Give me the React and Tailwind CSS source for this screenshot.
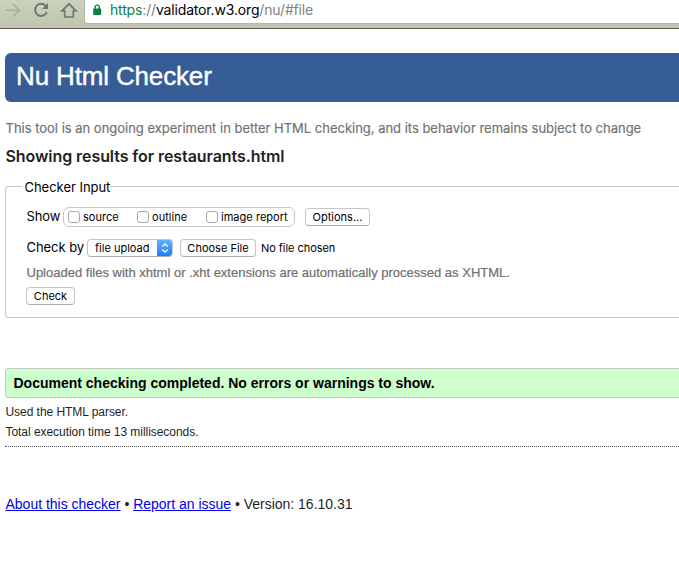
import React from "react";

const inter = "font-[Inter,sans-serif]";

function Toolbar() {
  return (
    <div className="flex h-[29px] w-full items-start border-b border-[#665e54] bg-linear-to-b from-[#cbd2be] to-[#bdc5b1]">
      <svg width="84" height="24" viewBox="0 0 84 24" className="shrink-0" fill="none" stroke="#72756f" strokeWidth="2">
        <path d="M6 10.3H19M12.8 3.8L19.3 10.3L12.8 16.8" stroke="#a9ae9f" strokeWidth="1.5" />
        <path d="M45.8 5.8A6.1 6.1 0 1 0 46.9 12" />
        <path d="M48 3V9H42Z" fill="#72756f" stroke="none" />
        <path d="M62 10.9L69 3.8L76 10.9H73.3V17H64.7V10.9Z" strokeWidth="1.7" />
      </svg>
      <div className="flex h-6 flex-1 items-start rounded-bl-[3px] border-b border-l border-[#b1b5aa] bg-white pl-2">
        <svg width="9" height="12" viewBox="0 0 9 12" className="mt-1">
          <path d="M2.1 5V3.2a2.1 2.1 0 0 1 4.2 0V5" fill="none" stroke="#0b8043" strokeWidth="1.4" />
          <rect x="0.2" y="4.5" width="8" height="6.5" rx="0.7" fill="#0b8043" />
        </svg>
        <span className={`${inter} ml-[8px] whitespace-nowrap text-[14px] leading-5 tracking-[-0.16px] text-black`}>
          <span className="text-[#0b8043]">https</span>
          <span className="text-[#808080]">://</span>validator.w3.org
          <span className="text-[#808080]">/nu/#file</span>
        </span>
      </div>
    </div>
  );
}

function Check({ label, width }) {
  return (
    <label className={`flex items-center ${width}`}>
      <span className="size-3 shrink-0 rounded-[3px] border border-[#a9a9a9] bg-white" />
      <span className="ml-[3px] text-[11px] tracking-[0.03px]">{label}</span>
    </label>
  );
}

function Button({ children, width }) {
  return (
    <button className={`flex h-[18px] items-center justify-center rounded-[4px] border border-[#c6c6c6] border-b-[#adadad] bg-white text-[11px] ${width}`}>
      {children}
    </button>
  );
}

export default function App() {
  return (
    <div className="h-[573px] w-[679px] overflow-hidden bg-white font-['Liberation_Sans',Arial,sans-serif] whitespace-nowrap text-black">
      <Toolbar />
      <main className="pl-[5px] pt-6">
        <h1 className="flex h-[49px] items-center rounded-l-[6px] bg-[#365d95] pb-[3px] pl-[11px] text-[26px] tracking-[-0.15px] text-white [-webkit-text-stroke:0.4px_white]">
          Nu Html Checker
        </h1>
        <p className={`${inter} mt-[16px] h-5 pl-[0.5px] text-[13px] leading-5 tracking-[-0.014px] text-[#707070] [-webkit-text-stroke:0.15px_#707070]`}>
          This tool is an ongoing experiment in better HTML checking, and its behavior remains subject to change
        </p>
        <h2 className={`${inter} mt-[6px] h-6 pl-[0.5px] text-[16px] leading-6 font-semibold tracking-[-0.07px] text-[#1f1f23]`}>
          Showing results for restaurants.html
        </h2>

        <section className={`${inter} mt-[10px] h-[140px]`}>
          <div className="flex h-[18px] items-center">
            <div className="mt-[8px] h-[10px] w-[17px] rounded-tl-[4px] border-t border-l border-[#c8c8c8]" />
            <span className="w-[88px] pl-[2.5px] text-[13px] leading-[18px] tracking-[-0.03px]">Checker Input</span>
            <div className="mt-[8px] h-[10px] flex-1 border-t border-[#c8c8c8]" />
          </div>
          <div className="h-[122px] rounded-bl-[4px] border-b border-l border-[#c8c8c8] pl-5">
            <div className="flex h-[42px] items-center">
              <span className="w-[37px] pl-[0.5px] text-[13px] tracking-[-0.1px]">Show</span>
              <div className="flex h-5 w-[232px] items-center rounded-[6px] border border-[#c8c8c8] pl-1">
                <Check label="source" width="w-[69px]" />
                <Check label="outline" width="w-[69px]" />
                <Check label="image report" width="w-[86px]" />
              </div>
              <div className="ml-[10px]"><Button width="w-[65px]">Options...</Button></div>
            </div>
            <div className="mt-[1px] flex h-[18px] items-center">
              <span className="w-[61px] pl-[0.5px] text-[13px] tracking-[-0.05px]">Check by</span>
              <div className="flex h-[18px] w-[86px] overflow-hidden rounded-[4px] border border-[#c6c6c6] border-b-[#adadad] text-[11px]">
                <span className="flex w-[70px] items-center pl-[7px]">file upload</span>
                <span className="-my-px -mr-px flex w-[16px] items-center justify-center bg-linear-to-b from-[#69b1fa] to-[#0d7bff]">
                  <svg width="8" height="12" viewBox="0 0 8 12" fill="none" stroke="white" strokeWidth="1.3">
                    <path d="M1.3 4.5L4 1.8L6.7 4.5M1.3 7.5L4 10.2L6.7 7.5" />
                  </svg>
                </span>
              </div>
              <div className="ml-[7px]"><Button width="w-[76px]">Choose File</Button></div>
              <span className="ml-[5px] text-[11px] tracking-[-0.05px]">No file chosen</span>
            </div>
            <p className="mt-[7px] h-[18px] pl-[0.5px] font-['Liberation_Sans',Arial,sans-serif] text-[13px] leading-[18px] text-[#707070] [-webkit-text-stroke:0.2px_#707070]">
              Uploaded files with xhtml or .xht extensions are automatically processed as XHTML.
            </p>
            <div className="mt-[5px]"><Button width="w-[49px]">Check</Button></div>
          </div>
        </section>

        <div className="mt-[50px] flex h-[30px] items-center rounded-l-[4px] border border-r-0 border-[#c8c8c8] bg-[#ccffcc] pl-[7.5px] text-[14px] font-bold">
          Document checking completed. No errors or warnings to show.
        </div>
        <div className="mt-[4px] h-[45px] border-b border-dotted border-[#606060] pl-[0.5px] text-[12px] leading-5 tracking-[-0.05px] text-[#1f1f23]">
          <p>Used the HTML parser.</p>
          <p>Total execution time 13 milliseconds.</p>
        </div>
        <footer className="mt-[47px] h-5 pl-[0.5px] text-[14px] leading-5 tracking-[-0.01px] text-[#1f1f23]">
          <a href="#about" className="text-[#0000ee] underline">About this checker</a>
          {" • "}
          <a href="#report" className="text-[#0000ee] underline">Report an issue</a>
          {" • Version: 16.10.31"}
        </footer>
      </main>
    </div>
  );
}
